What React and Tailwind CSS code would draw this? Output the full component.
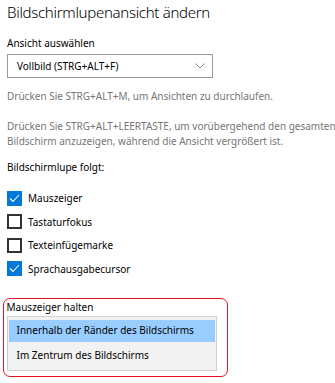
const FOLLOWS = [
  { label: "Mauszeiger", checked: true },
  { label: "Tastaturfokus", checked: false },
  { label: "Texteinfügemarke", checked: false },
  { label: "Sprachausgabecursor", checked: true },
];

function Checkbox({ checked }) {
  if (checked) {
    return (
      <span className="w-[15px] h-[15px] bg-[#0078d7] flex items-center justify-center shrink-0">
        <svg width="11" height="9" viewBox="0 0 11 9" fill="none">
          <path d="M1 4.5 L4 7.5 L10 1" stroke="white" strokeWidth="1.1" />
        </svg>
      </span>
    );
  }
  return <span className="w-[15px] h-[15px] border-2 border-[#333] bg-white shrink-0" />;
}

export default function App() {
  return (
    <div
      className="w-[335px] h-[383px] bg-white text-black overflow-hidden px-[7px] text-[10px]"
      style={{ fontFamily: '"Noto Sans", "Open Sans", sans-serif' }}
    >
      {/* ── Title ── */}
      <h1 className="h-[24px] text-[15px] font-light leading-[24px] tracking-[-0.3px] whitespace-nowrap">
        Bildschirmlupenansicht ändern
      </h1>

      <div className="mt-[11px] leading-[16px]">Ansicht auswählen</div>

      {/* Dropdown */}
      <div className="mt-[3px] w-[206px] h-[24px] border border-[#999] flex items-center justify-between pl-[9px] pr-[7px]">
        <span className="leading-none">Vollbild (STRG+ALT+F)</span>
        <svg width="10" height="6" viewBox="0 0 10 6" fill="none">
          <path d="M0.5 0.5 L5 5 L9.5 0.5" stroke="#777" strokeWidth="0.9" />
        </svg>
      </div>

      <p className="mt-[11px] leading-[15px] text-[#767676] whitespace-nowrap">
        Drücken Sie STRG+ALT+M, um Ansichten zu durchlaufen.
      </p>

      <p className="mt-[15px] leading-[15px] text-[#767676] whitespace-nowrap">
        Drücken Sie STRG+ALT+LEERTASTE, um vorübergehend den gesamten
        <br />
        Bildschirm anzuzeigen, während die Ansicht vergrößert ist.
      </p>

      <div className="mt-[10px] leading-[16px]">Bildschirmlupe folgt:</div>

      {/* ── Checkboxes ── */}
      <div className="mt-[15px] flex flex-col gap-[7.5px]">
        {FOLLOWS.map(({ label, checked }) => (
          <div key={label} className="flex items-center gap-[6px] h-[16px]">
            <Checkbox checked={checked} />
            <span className="leading-none">{label}</span>
          </div>
        ))}
      </div>

      {/* ── Highlighted list ── */}
      <div className="mt-[21.5px] -ml-[4px] w-[225px] border-[1.5px] border-[#e81123] rounded-[7px] pl-[2.5px] pb-[5.5px]">
        <div className="leading-[16.5px]">Mauszeiger halten</div>
        <div className="w-[210px] border border-[#d0d0d0] bg-[#f2f2f2] pt-[3px] px-[1px]">
          <div className="h-[22px] bg-[#99ccff] flex items-center pl-[8px]">
            Innerhalb der Ränder des Bildschirms
          </div>
          <div className="h-[28px] flex items-center pl-[8px]">
            Im Zentrum des Bildschirms
          </div>
        </div>
      </div>
    </div>
  );
}
